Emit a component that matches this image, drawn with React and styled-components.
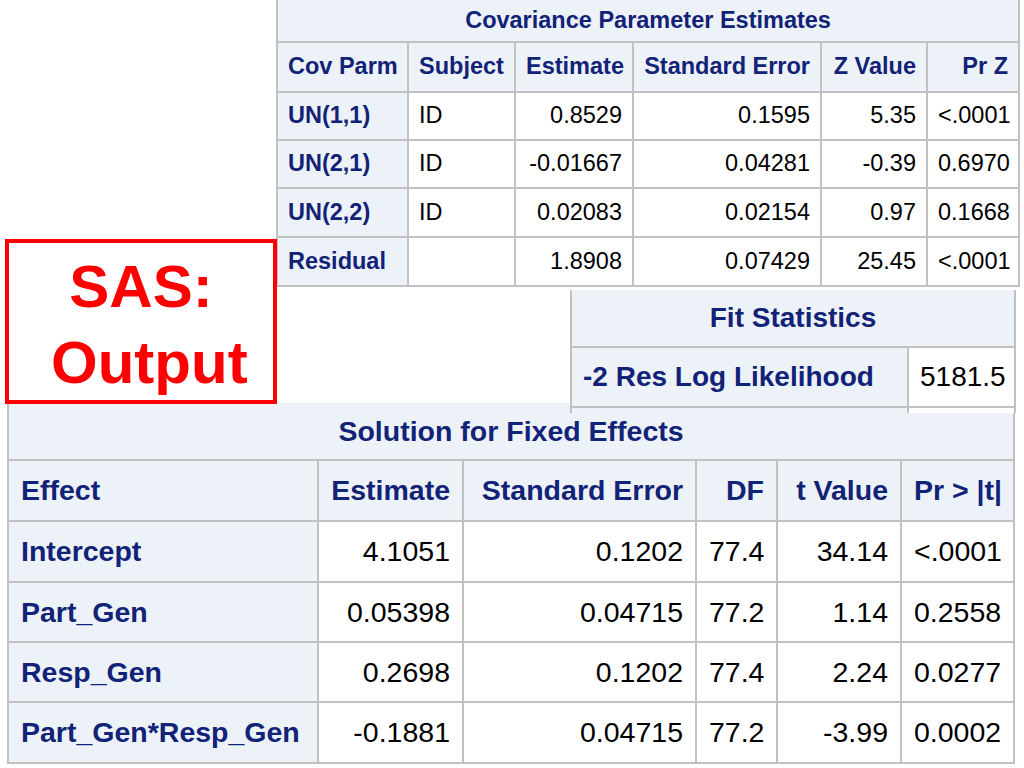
import React from "react";
import styled, { createGlobalStyle } from "styled-components";

const GlobalStyle = createGlobalStyle`
  html, body {
    margin: 0;
    padding: 0;
    background: #ffffff;
  }
`;

const Slide = styled.div`
  width: 1024px;
  height: 768px;
  overflow: hidden;
  background: #ffffff;
  font-family: "Liberation Sans", Arial, sans-serif;
`;

const TopArea = styled.div`
  display: grid;
  grid-template-columns: 5px 271px 294px 454px;
  grid-template-rows: 239px 47px 127px;
`;

const CovBlock = styled.div`
  grid-column: 3 / 5;
  grid-row: 1 / 3;
`;

const Callout = styled.div`
  grid-column: 2;
  grid-row: 2 / 4;
  align-self: start;
  position: relative;
  z-index: 2;
  width: 272px;
  height: 165px;
  box-sizing: border-box;
  padding-top: 6px;
  border: 4px solid #ff0000;
  background: #ffffff;
  color: #ff0000;
  font: 700 60px/76px "Liberation Sans", Arial, sans-serif;
  text-align: center;
`;

const CalloutLine = styled.div`
  white-space: pre;
`;

const FitClip = styled.div`
  grid-column: 4;
  grid-row: 3;
  position: relative;
  z-index: 1;
  margin-top: 4px;
  height: 123px;
  overflow: hidden;
`;

const SolutionBlock = styled.div`
  position: relative;
  z-index: 0;
  margin: -10px 0 0 7px;
`;

const Table = styled.table`
  --pad: ${(p) => p.$pad}px;
  border-collapse: collapse;
  table-layout: fixed;
  width: ${(p) => p.$width}px;
  font-family: "Liberation Sans", Arial, sans-serif;
  font-size: ${(p) => p.$size}px;
  line-height: 1;
`;

const Col = styled.col`
  width: ${(p) => p.$w}px;
`;

const Row = styled.tr`
  height: ${(p) => p.$h}px;
`;

const TitleCell = styled.th`
  padding: 0;
  border: 2px solid #c1c1c1;
  border-top: 0;
  background: #edf2f9;
  color: #112277;
  font-weight: 700;
  text-align: center;
  white-space: nowrap;
`;

const HeadCell = styled.th`
  padding: 0 var(--pad);
  border: 2px solid #c1c1c1;
  background: #edf2f9;
  color: #112277;
  font-weight: 700;
  text-align: ${(p) => p.$align};
  white-space: nowrap;
  overflow: hidden;
`;

const DataCell = styled.td`
  padding: 0 var(--pad);
  border: 2px solid #c1c1c1;
  background: #ffffff;
  color: #000000;
  font-weight: 400;
  text-align: ${(p) => p.$align};
  white-space: nowrap;
  overflow: hidden;
`;

function SasTable({ title, widths, aligns, header, rows, heights, size, pad }) {
  const width = widths.reduce((a, b) => a + b, 0);
  return (
    <Table $width={width} $size={size} $pad={pad}>
      <colgroup>
        {widths.map((w, i) => (
          <Col key={i} $w={w} />
        ))}
      </colgroup>
      <tbody>
        <Row $h={heights.title}>
          <TitleCell colSpan={widths.length}>{title}</TitleCell>
        </Row>
        {header && (
          <Row $h={heights.head}>
            {header.map((h, i) => (
              <HeadCell key={i} $align={aligns[i]}>
                {h}
              </HeadCell>
            ))}
          </Row>
        )}
        {rows.map((r, ri) => (
          <Row key={ri} $h={heights.rows[ri]}>
            {r.map((c, ci) =>
              ci === 0 ? (
                <HeadCell key={ci} $align="left">
                  {c}
                </HeadCell>
              ) : (
                <DataCell key={ci} $align={aligns[ci]}>
                  {c}
                </DataCell>
              )
            )}
          </Row>
        ))}
      </tbody>
    </Table>
  );
}

const covRows = [
  ["UN(1,1)", "ID", "0.8529", "0.1595", "5.35", "<.0001"],
  ["UN(2,1)", "ID", "-0.01667", "0.04281", "-0.39", "0.6970"],
  ["UN(2,2)", "ID", "0.02083", "0.02154", "0.97", "0.1668"],
  ["Residual", "", "1.8908", "0.07429", "25.45", "<.0001"],
];

// second row is hidden under the solution table, only its top edge shows
const fitRows = [
  ["-2 Res Log Likelihood", "5181.5"],
  ["", ""],
];

const solutionRows = [
  ["Intercept", "4.1051", "0.1202", "77.4", "34.14", "<.0001"],
  ["Part_Gen", "0.05398", "0.04715", "77.2", "1.14", "0.2558"],
  ["Resp_Gen", "0.2698", "0.1202", "77.4", "2.24", "0.0277"],
  ["Part_Gen*Resp_Gen", "-0.1881", "0.04715", "77.2", "-3.99", "0.0002"],
];

export default function App() {
  return (
    <Slide>
      <GlobalStyle />
      <TopArea>
        <CovBlock>
          <SasTable
            title="Covariance Parameter Estimates"
            widths={[131, 107, 118, 188, 106, 92]}
            aligns={["left", "left", "right", "right", "right", "right"]}
            header={["Cov Parm", "Subject", "Estimate", "Standard Error", "Z Value", "Pr Z"]}
            rows={covRows}
            heights={{ title: 42, head: 50, rows: [48, 48, 49, 49] }}
            size={23.5}
            pad={10}
          />
        </CovBlock>
        <Callout>
          <CalloutLine>SAS:</CalloutLine>
          <CalloutLine>{"\u00a0Output"}</CalloutLine>
        </Callout>
        <FitClip>
          <SasTable
            title="Fit Statistics"
            widths={[337, 107]}
            aligns={["left", "right"]}
            rows={fitRows}
            heights={{ title: 57, rows: [60, 60] }}
            size={28}
            pad={11}
          />
        </FitClip>
      </TopArea>
      <SolutionBlock>
        <SasTable
          title="Solution for Fixed Effects"
          widths={[310, 145, 233, 81, 124, 113]}
          aligns={["left", "right", "right", "right", "right", "right"]}
          header={["Effect", "Estimate", "Standard Error", "DF", "t Value", "Pr > |t|"]}
          rows={solutionRows}
          heights={{ title: 57, head: 61, rows: [61, 60, 60, 61] }}
          size={28.5}
          pad={12}
        />
      </SolutionBlock>
    </Slide>
  );
}
